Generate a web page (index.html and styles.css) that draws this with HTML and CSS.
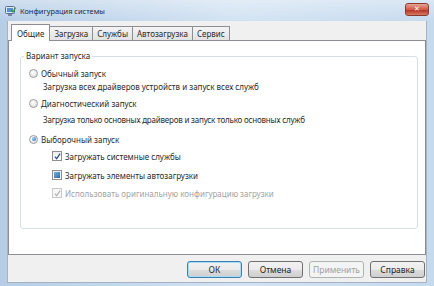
FILE: index.html
```html
<html>
    <head>
        <title>Конфигурация системы</title>
        <link rel="stylesheet" href="styles.css">
    </head>
    <body>
        <div class="window">
            <div class="titlebar">
                <svg class="appIcon" width="11" height="11" viewBox="0 0 11 11">
                    <rect x="0.5" y="0.5" width="9" height="7" rx="1" fill="#dfe8f2" stroke="#5a6f8c"/>
                    <rect x="2" y="2" width="6" height="4" fill="#5b8fd0"/>
                    <rect x="3" y="8" width="4" height="2" fill="#7a879a"/>
                    <path d="M6 4 L8 6 L10.5 1.5" stroke="#2f9a3a" stroke-width="1.3" fill="none"/>
                </svg>
                <span class="title">Конфигурация системы</span>
                <div class="closeBtn">✕</div>
            </div>
            <div class="client">
                <!--Pestañas-->
                <div class="tabs">
                    <div class="tab active">Общие</div>
                    <div class="tab">Загрузка</div>
                    <div class="tab">Службы</div>
                    <div class="tab">Автозагрузка</div>
                    <div class="tab">Сервис</div>
                </div>
                <div class="panel">
                    <fieldset class="grupo">
                        <legend>Вариант запуска</legend>
                        <div class="fila r1"><span class="radio"></span>Обычный запуск</div>
                        <div class="desc d1">Загрузка всех драйверов устройств и запуск всех служб</div>
                        <div class="fila r2"><span class="radio"></span>Диагностический запуск</div>
                        <div class="desc d2">Загрузка только основных драйверов и запуск только основных служб</div>
                        <div class="fila r3"><span class="radio checked"></span>Выборочный запуск</div>
                        <div class="fila sub c1">
                            <span class="check">
                                <svg width="8" height="8" viewBox="0 0 8 8"><path d="M1 4.2 L3 6.5 L7 0.8" stroke="#2a4f8a" stroke-width="1.4" fill="none"/></svg>
                            </span>Загружать системные службы
                        </div>
                        <div class="fila sub c2"><span class="check mixed"><span class="cuadro"></span></span>Загружать элементы автозагрузки</div>
                        <div class="fila sub c3 disabled">
                            <span class="check">
                                <svg width="8" height="8" viewBox="0 0 8 8"><path d="M1 4.2 L3 6.5 L7 0.8" stroke="#b4b4b4" stroke-width="1.4" fill="none"/></svg>
                            </span>Использовать оригинальную конфигурацию загрузки
                        </div>
                    </fieldset>
                </div>
                <div class="botones">
                    <button class="btn default">ОК</button>
                    <button class="btn">Отмена</button>
                    <button class="btn" disabled>Применить</button>
                    <button class="btn">Справка</button>
                </div>
            </div>
        </div>
    </body>
</html>
```

FILE: styles.css
```css
body
{
    margin: 0;
    width: 434px;
    height: 286px;
    overflow: hidden;
    font-family: "Noto Sans", "Open Sans", sans-serif;
    font-size: 8px;
    color: #2a2a2a;
    background: linear-gradient(to right, #b5cde6, #d3e3f3 55%, #c6daee);
}
.window
{
    height: 286px;
    display: flex;
    flex-direction: column;
}
.titlebar
{
    height: 21px;
    display: flex;
    align-items: center;
    padding-left: 5px;
    padding-right: 5px;
    background: linear-gradient(to bottom, rgba(255,255,255,0.35), rgba(255,255,255,0));
}
.appIcon
{
    margin-right: 4px;
    margin-top: 1px;
}
.title
{
    font-size: 7.4px;
    color: #1b2a3c;
    flex: 1;
}
.closeBtn
{
    width: 22px;
    height: 11px;
    margin-top: -2px;
    border: 1px solid #8a3b30;
    border-radius: 3px;
    background: linear-gradient(to bottom, #e8a595, #cf5a45 50%, #b8382a 60%, #d77a62);
    color: #ffffff;
    font-size: 7px;
    font-weight: bold;
    line-height: 11px;
    text-align: center;
    font-family: "DejaVu Sans", sans-serif;
}
.client
{
    margin: 0 7px;
    height: 261px;
    background-color: #f0f0f0;
    border: 1px solid #a3b3c4;
    border-top: none;
    display: flex;
    flex-direction: column;
}
.tabs
{
    display: flex;
    align-items: flex-end;
    margin-left: 3px;
    height: 19px;
    font-size: 8px;
}
.tab
{
    height: 13px;
    line-height: 13px;
    padding: 0 4px;
    border: 1px solid #8c8e94;
    border-bottom: none;
    border-left: none;
    background: linear-gradient(to bottom, #f4f4f4, #e2e2e2);
    color: #2a2a2a;
}
.tab.active
{
    height: 16px;
    line-height: 17px;
    background: #ffffff;
    border-left: 1px solid #8c8e94;
    margin-bottom: -1px;
    position: relative;
    padding: 0 5px;
}
.panel
{
    background-color: #ffffff;
    border: 1px solid #8c8e94;
    height: 213px;
    display: flex;
    flex-direction: column;
}
.grupo
{
    margin: 9px 7px 0 11px;
    padding: 0;
    border: 1px solid #d5dfe5;
    border-radius: 3px;
    height: 177px;
}
.grupo legend
{
    padding: 0 2px;
    margin-left: 3px;
    line-height: 12px;
    color: #2a2a2a;
}
.fila
{
    display: flex;
    align-items: center;
    height: 12px;
    padding-left: 8px;
}
.desc
{
    height: 12px;
    line-height: 12px;
    padding-left: 22px;
}
.r1 { margin-top: 5px; }
.d1 { margin-top: 2px; }
.r2 { margin-top: 4px; }
.d2 { margin-top: 5px; letter-spacing: -0.2px; }
.r3 { margin-top: 7px; }
.c1 { margin-top: 5px; }
.c2 { margin-top: 7px; }
.c3 { margin-top: 6px; }
.sub
{
    padding-left: 31px;
}
.radio
{
    width: 7px;
    height: 7px;
    border-radius: 50%;
    border: 1px solid #9a9a9a;
    background: radial-gradient(circle at 40% 35%, #ffffff, #d9d9d9);
    margin-right: 3px;
    display: flex;
    align-items: center;
    justify-content: center;
}
.radio.checked::after
{
    content: "";
    width: 4px;
    height: 4px;
    border-radius: 50%;
    background: radial-gradient(circle at 35% 35%, #9fd3ff, #1d5ea8);
}
.check
{
    width: 8px;
    height: 8px;
    border: 1px solid #8f8f8f;
    background: linear-gradient(to bottom, #ededed, #ffffff);
    margin-right: 3px;
    display: flex;
    align-items: center;
    justify-content: center;
}
.check svg
{
    width: 7px;
    height: 7px;
}
.cuadro
{
    width: 6px;
    height: 6px;
    background: linear-gradient(135deg, #6fb3e0, #2a6cae);
}
.disabled
{
    color: #a3a3a3;
}
.disabled .check
{
    border-color: #c9c9c9;
    background: #f7f7f7;
}
.botones
{
    display: flex;
    justify-content: flex-end;
    gap: 6px;
    margin-top: 6px;
    padding-right: 1px;
}
.btn
{
    width: 55px;
    height: 17px;
    padding: 0;
    font-family: "Noto Sans", "Open Sans", sans-serif;
    font-size: 8.5px;
    color: #1e1e1e;
    border: 1px solid #707070;
    border-radius: 3px;
    background: linear-gradient(to bottom, #f2f2f2 0%, #ebebeb 50%, #dddddd 51%, #cfcfcf 100%);
}
.btn.default
{
    border-color: #3c7fb1;
    box-shadow: inset 0 0 0 1px #a6dcf5;
}
.btn:disabled
{
    border-color: #adb2b5;
    background: #f4f4f4;
    color: #a0a0a0;
}
```
